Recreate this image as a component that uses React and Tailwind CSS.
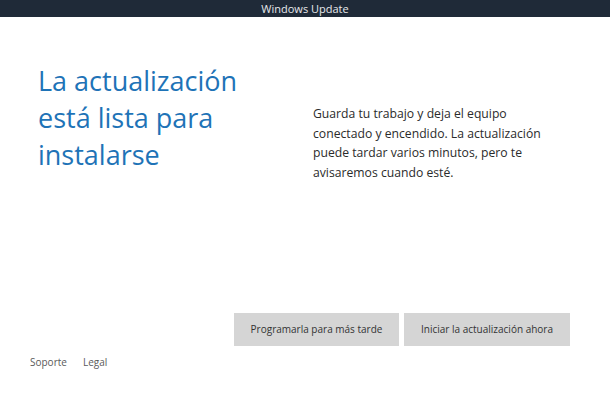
const App = () => {
  return (
    <div
      className="flex h-[394px] w-[610px] flex-col bg-white"
      style={{ fontFamily: '"Open Sans", "Noto Sans", sans-serif' }}
    >
      <div className="flex h-[17px] items-center justify-center bg-[#1f2a38] text-[11px] leading-none text-[#e6e8eb]">
        Windows Update
      </div>

      <div className="flex h-[166px] pt-[45px]">
        <h1 className="w-[312px] pl-[38px] pr-[40px] text-[27px] font-normal leading-[37px] text-[#1e73b7]">
          La actualización está lista para instalarse
        </h1>
        <p className="mt-[42px] w-[250px] pl-[1px] text-[12.2px] leading-[19.7px] text-[#2b2b2b]">
          Guarda tu trabajo y deja el equipo conectado y encendido. La
          actualización puede tardar varios minutos, pero te avisaremos
          cuando esté.
        </p>
      </div>

      <div className="mt-[130px] flex gap-[5px] pl-[234px]">
        <button className="h-[33px] w-[165px] bg-[#d5d5d5] text-[10px] text-[#333]">
          Programarla para más tarde
        </button>
        <button className="h-[33px] w-[166px] bg-[#d5d5d5] text-[10px] text-[#333]">
          Iniciar la actualización ahora
        </button>
      </div>

      <div className="mt-[9px] flex gap-[16px] pl-[30px] text-[10px] leading-[14px] text-[#5a5a5a]">
        <span>Soporte</span>
        <span>Legal</span>
      </div>
    </div>
  )
}

export default App
